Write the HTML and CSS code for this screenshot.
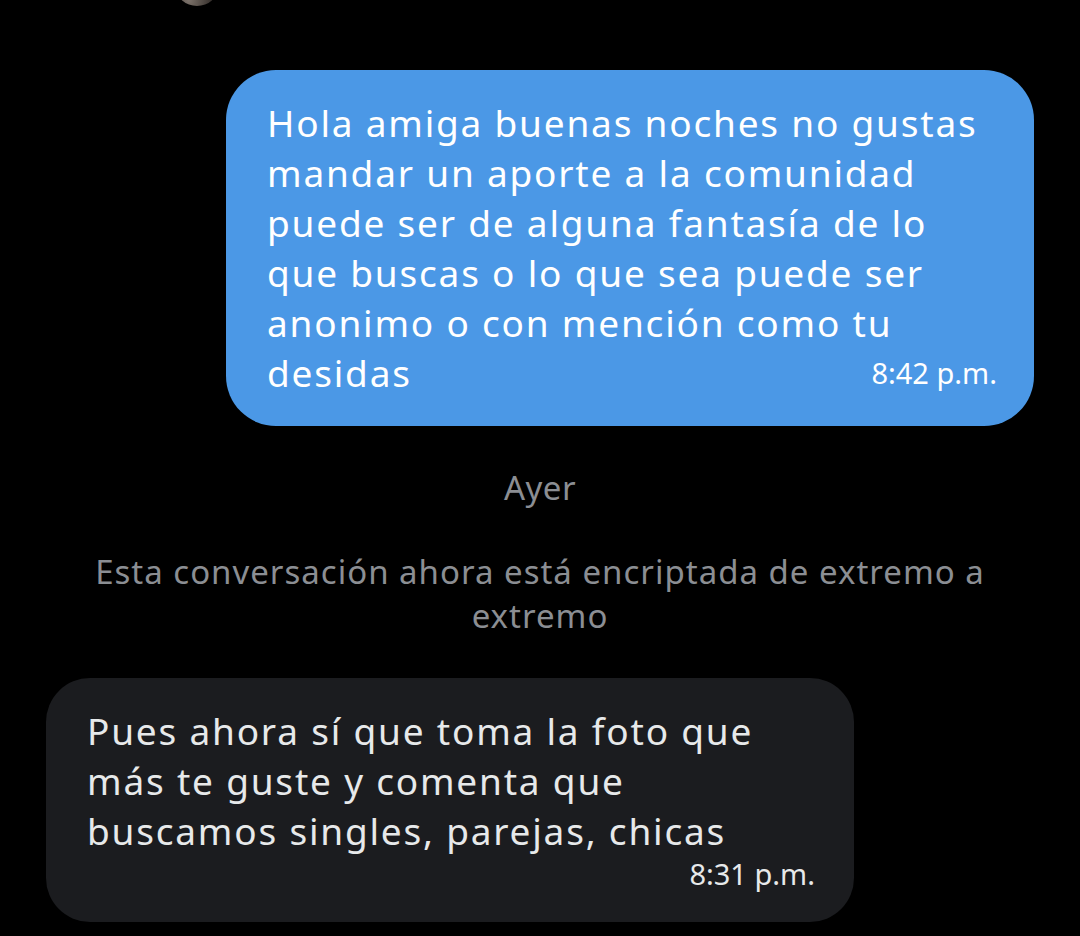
FILE: index.html
```html
<!DOCTYPE html>
<html lang="es">
<head>
  <meta charset="UTF-8">
  <meta name="viewport" content="width=device-width, initial-scale=1.0">
  <title>Mensajes</title>
  <link rel="stylesheet" href="styles.css">
</head>
<body>
  <div class="chat">
    <div class="avatar-edge"></div>

    <div class="msg msg-out">
      <p class="msg-text">Hola amiga buenas noches no gustas<br>
        mandar un aporte a la comunidad<br>
        puede ser de alguna fantasía de lo<br>
        que buscas o lo que sea puede ser<br>
        anonimo o con mención como tu<br>
        desidas<span class="time">8:42 p.m.</span></p>
    </div>

    <div class="day">Ayer</div>

    <div class="notice">Esta conversación ahora está encriptada de extremo a<br>extremo</div>

    <div class="msg msg-in">
      <p class="msg-text">Pues ahora sí que toma la foto que<br>
        más te guste y comenta que<br>
        buscamos singles, parejas, chicas</p>
      <div class="time">8:31 p.m.</div>
    </div>
  </div>
</body>
</html>
```

FILE: styles.css
```css
html, body {
  margin: 0;
  background: #000;
}
body {
  font-family: "Noto Sans", "Open Sans", sans-serif;
  color: #e7e9ea;
}
.chat {
  width: 1080px;
  height: 936px;
  overflow: hidden;
  display: flex;
  flex-direction: column;
  position: relative;
}
.avatar-edge {
  position: absolute;
  left: 176px;
  top: -32px;
  width: 42px;
  height: 38px;
  border-radius: 50%;
  background: radial-gradient(circle at 30% 85%, #7d736b, #3a3430 50%, #080707 80%);
}
.msg {
  width: 808px;
  box-sizing: border-box;
  border-radius: 50px;
}
.msg-text {
  margin: 0;
  font-size: 37px;
  line-height: 50px;
  letter-spacing: 1.8px;
}
.msg .time {
  letter-spacing: 0;
  font-size: 29px;
}
.msg-out {
  margin: 70px 46px 0 auto;
  padding: 28px 37px 28px 41px;
  background: #4b98e6;
  color: #fff;
}
.msg-out .time {
  float: right;
}
.msg-in {
  margin: 0 0 0 46px;
  padding: 28px 39px 30px 41px;
  background: #1b1c1f;
  border-radius: 44px;
}
.msg-in .time {
  text-align: right;
  line-height: 36px;
}
.day {
  margin-top: 42px;
  text-align: center;
  font-size: 33px;
  line-height: 40px;
  letter-spacing: 0.5px;
  color: #8b8e93;
}
.notice {
  margin: 42px 0 40px;
  text-align: center;
  font-size: 33px;
  line-height: 44px;
  letter-spacing: 1px;
  color: #8b8e93;
}
```
